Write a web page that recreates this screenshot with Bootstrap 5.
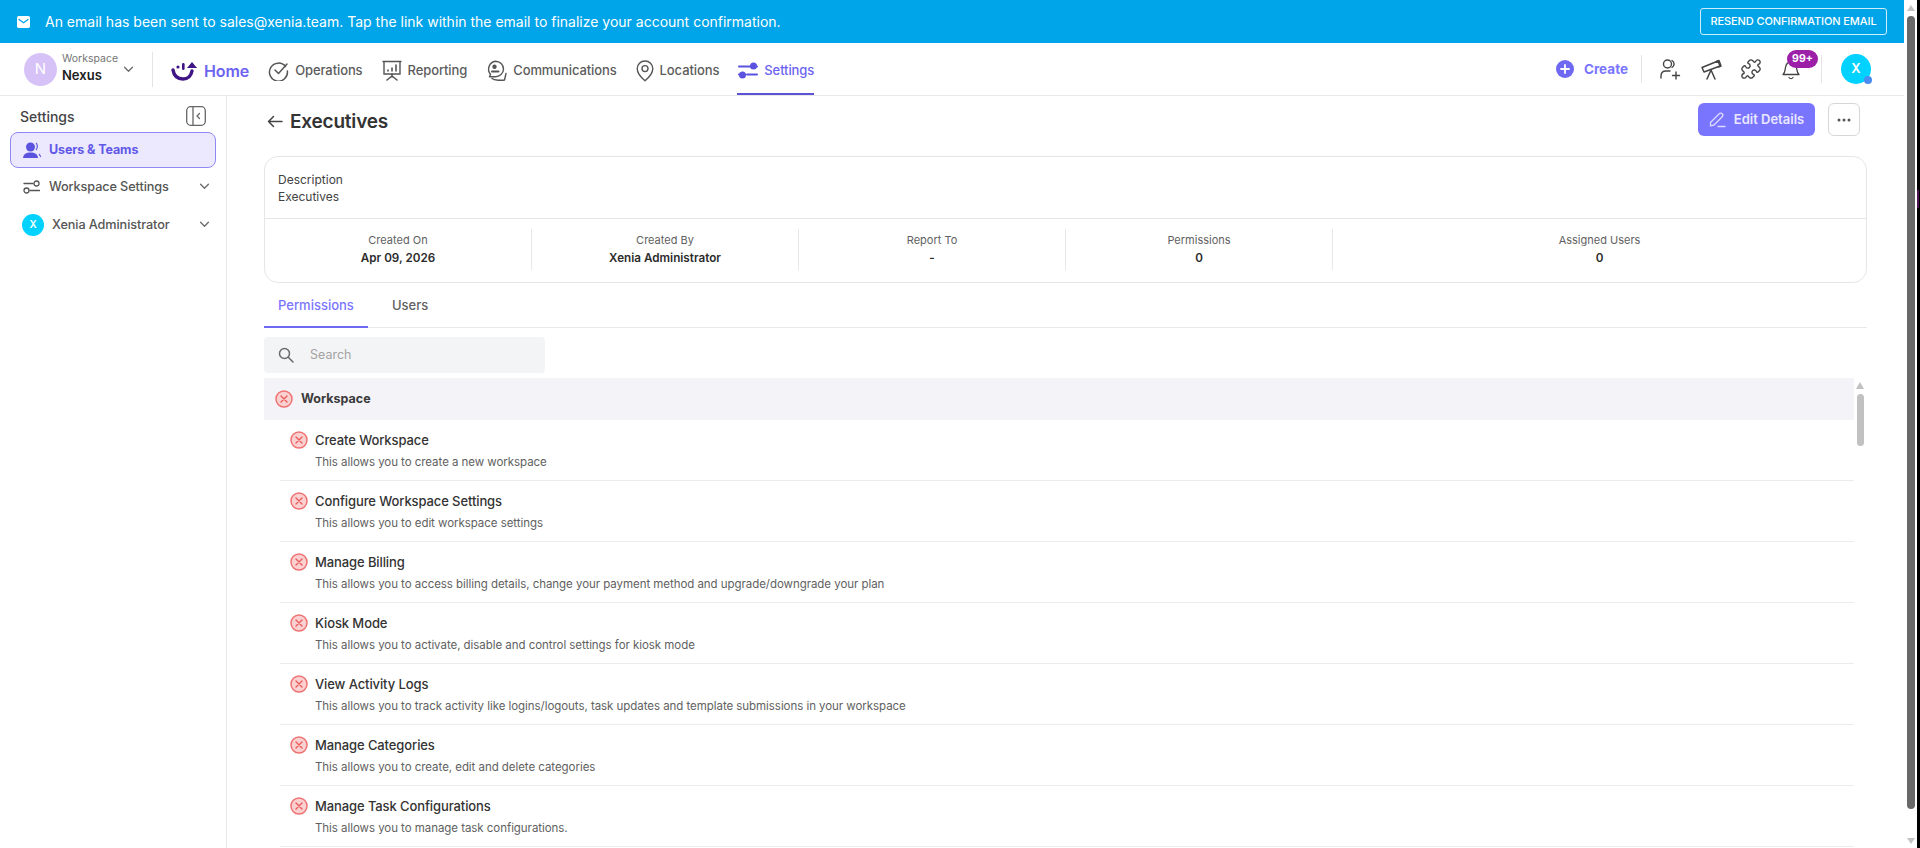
<!DOCTYPE html>
<html lang="en">
<head>
  <meta charset="UTF-8" />
  <meta name="viewport" content="width=device-width, initial-scale=1.0"/>
  <title>Executives</title>
  <link href="https://cdn.jsdelivr.net/npm/bootstrap@5.3.3/dist/css/bootstrap.min.css" rel="stylesheet">
  <style>
    html, body { height: 100%; overflow: hidden; }
    body { font-family: Inter, "Noto Sans", sans-serif; color: #212121; background: #000; font-size: 13px; }
    .page-frame { height: 848px; }
    .app-col { width: 1904px; background: #fff; }
    .bar-col { width: 13px; background: #fff; }
    .edge-col { width: 3px; background: #000; }
    .edge-tick { width: 2px; height: 18px; margin-top: 190px; background: #4a1050; }
    .bar-thumb { width: 8px; height: 793px; margin: 5px 3px 0 3px; border-radius: 4px; background: #686868; }
    .arrow-up, .arrow-down { width: 0; height: 0; margin: 5px auto 0; border-left: 4.5px solid transparent; border-right: 4.5px solid transparent; }
    .arrow-up { border-bottom: 6px solid #c4c4c4; }
    .arrow-down { margin-top: 29px; border-top: 6px solid #c4c4c4; }

    .top-banner { height: 43px; background: #00a4e8; color: #fff; padding: 0 17px; font-size: 14px; }
    .banner-text { margin-left: 15px; }
    .resend-btn { height: 27px; width: 187px; padding: 0; border: 1px solid #cdeefb; border-radius: 3px; background: transparent; color: #fff; font-size: 11px; font-weight: 500; letter-spacing: -.1px; }

    .main-head { height: 53px; border-bottom: 1px solid #e8e8e8; padding-left: 24px; padding-right: 33px; }
    .ws-avatar { width: 33px; height: 33px; border-radius: 50%; background: #d6c2f7; color: #fff; font-size: 15px; }
    .ws-block { width: 61px; margin-left: 5px; margin-top: -2px; }
    .ws-small { font-size: 10.5px; color: #757575; line-height: 14px; }
    .ws-name { font-size: 13px; font-weight: 600; line-height: 18px; }
    .v-rule { width: 1px; background: #e4e4e4; }
    .rule-ws { height: 35px; margin: 0 18px 0 18px; }
    .rule-create { height: 28px; margin: 0 18px 0 13px; }
    .rule-user { height: 28px; margin: 0 19px 0 21px; }
    .head-nav { gap: 19px; }
    .head-link { display: flex; align-items: center; gap: 6px; height: 52px; padding-top: 3px; color: #5c5c5c; font-size: 13px; font-weight: 500; text-decoration: none; position: relative; white-space: nowrap; letter-spacing: -.1px; }
    .head-link.is-on { color: #6c63f0; }
    .head-link.is-on::after { content: ""; position: absolute; left: -1px; right: 0; bottom: 0; height: 2px; background: #5b52d6; }
    .home-link { color: #6c63f0; font-size: 16px; font-weight: 600; }
    .create-link { margin-left: 10px; color: #7a75ff; font-size: 13.5px; font-weight: 700; text-decoration: none; }
    .gap-telescope { margin-left: 20px; }
    .gap-puzzle { margin-left: 18px; }
    .bell-box { width: 18px; height: 22px; margin-left: 20px; position: relative; }
    .count-pill { position: absolute; left: 5px; top: -8px; width: 31px; height: 18px; border-radius: 9px; background: #9c1fa8; color: #fff; font-size: 10.5px; font-weight: 700; }
    .user-circle { width: 30px; height: 30px; border-radius: 50%; background: #00d2ff; color: #fff; font-size: 13px; font-weight: 600; position: relative; }
    .user-dot { position: absolute; right: -1px; bottom: 0; width: 8px; height: 8px; border-radius: 50%; background: #4a8cf0; }

    .side-col { width: 227px; border-right: 1px solid #e8e8e8; padding: 7px 10px 0 10px; }
    .side-title { font-size: 14px; font-weight: 500; color: #444; padding: 0 10px 0 10px; height: 26px; margin-bottom: 3px; }
    .side-item { height: 37px; padding-left: 13px; padding-right: 6px; color: #555; font-size: 12.7px; font-weight: 500; letter-spacing: -.1px; }
    .side-item.is-on { height: 36px; border: 1px solid #8f88f2; border-radius: 8px; background: #ece9fe; color: #6158e8; font-size: 12.5px; font-weight: 700; padding-left: 12px; }
    .side-item.is-on span { margin-left: 8px; padding-top: 1px; }
    .side-tool span { margin-left: 9px; }
    .side-owner { margin-top: 1px; padding-left: 12px; }
    .x-mini { width: 22px; height: 22px; border-radius: 50%; background: #00d2ff; color: #fff; font-size: 10px; font-weight: 600; }

    .work-col { padding: 7px 37px 0 37px; min-width: 0; }
    .title-row { height: 33px; }
    .back-arrow { margin: 4px 0 0 3px; }
    .page-title { font-size: 19px; font-weight: 600; color: #333; margin: 5px 0 0 7px; letter-spacing: -.2px; }
    .edit-btn { width: 117px; height: 33px; padding: 0; border: 0; border-radius: 6px; background: #7a75ff; color: #e9e8ff; font-size: 13px; font-weight: 600; }
    .more-btn { width: 32px; height: 33px; padding: 0; border: 1px solid #d6d6d6; border-radius: 6px; background: #fff; margin: 0 7px 0 13px; }
    .info-box { height: 127px; margin-top: 20px; border: 1px solid #e6e6e6; border-radius: 14px; }
    .info-top { height: 62px; padding: 14px 13px 0; border-bottom: 1px solid #e6e6e6; font-size: 12px; line-height: 17px; color: #424242; }
    .stat-row { padding-top: 10px; }
    .stat-cell { width: 267px; height: 41px; padding-top: 3px; border-right: 1px solid #e8e8e8; text-align: center; }
    .stat-cell.is-last { flex: 1; border-right: 0; }
    .stat-key { font-size: 11px; line-height: 17px; color: #616161; }
    .stat-val { font-size: 11.7px; font-weight: 600; line-height: 19px; color: #2b2b2b; }
    .tab-strip { height: 45px; border-bottom: 1px solid #e8e8e8; font-size: 13px; font-weight: 500; }
    .tab-item { height: 45px; color: #616161; padding-top: 13px; text-decoration: none; position: relative; }
    .tab-item.is-on { width: 104px; padding-left: 14px; color: #7a75ff; border-bottom: 2px solid #6e68f2; }
    .search-wrap { width: 281px; height: 36px; margin-top: 9px; padding-left: 14px; border-radius: 4px; background: #f3f4f6; }
    .search-wrap input { width: 200px; margin-left: 16px; border: 0; padding: 0; outline: 0; background: transparent; font-size: 12.5px; }
    .search-wrap input::placeholder { color: #a3a3a3; }
    .perm-scroll { margin-top: 5px; }
    .perm-rows { width: 1590px; }
    .perm-head { height: 42px; padding-left: 11px; background: #f3f3f8; font-size: 12.5px; font-weight: 700; color: #3a3a3a; }
    .perm-row { height: 61px; margin-left: 16px; padding: 11px 0 0 10px; border-bottom: 1px solid #ececec; }
    .perm-icon { margin-right: 7px; flex-shrink: 0; }
    .perm-name { font-size: 13px; font-weight: 500; line-height: 18px; color: #333; letter-spacing: -.1px; }
    .perm-note { font-size: 11.5px; line-height: 16px; margin-top: 5px; color: #616161; letter-spacing: -.05px; }
    .inner-bar { width: 9px; margin-left: 2px; padding-top: 4px; }
    .inner-up { width: 0; height: 0; border-left: 4.5px solid transparent; border-right: 4.5px solid transparent; border-bottom: 7px solid #c1c1c1; }
    .inner-thumb { width: 7px; height: 52px; margin: 5px 0 0 1px; border-radius: 4px; background: #c1c1c1; }
  </style>
</head>
<body>

<svg width="0" height="0" class="d-none">
  <symbol id="deny" viewBox="0 0 18 18">
    <circle cx="9" cy="9" r="8" fill="#fbd0d0" stroke="#ee7272" stroke-width="1.5"/>
    <path d="M6 6l6 6M12 6l-6 6" stroke="#e85c5c" stroke-width="1.4" stroke-linecap="round"/>
  </symbol>
  <symbol id="chev" viewBox="0 0 12 8">
    <path d="M1.5 1.5L6 6l4.5-4.5" fill="none" stroke="#6b6b6b" stroke-width="1.5" stroke-linecap="round" stroke-linejoin="round"/>
  </symbol>
</svg>

<div class="page-frame d-flex">
  <div class="app-col d-flex flex-column">

    <!-- Banner -->
    <div class="top-banner d-flex align-items-center">
      <svg width="13" height="12" viewBox="0 0 12 11" class="flex-shrink-0"><rect width="12" height="11" rx="1.5" fill="#fff"/><path d="M1.5 3L6 6.2 10.5 3" fill="none" stroke="#00a4e8" stroke-width="1.2"/></svg>
      <span class="banner-text flex-grow-1">An email has been sent to sales@xenia.team. Tap the link within the email to finalize your account confirmation.</span>
      <button class="resend-btn" type="button">RESEND CONFIRMATION EMAIL</button>
    </div>

    <!-- Header -->
    <div class="main-head d-flex align-items-center">
      <div class="ws-avatar d-flex align-items-center justify-content-center flex-shrink-0">N</div>
      <div class="ws-block">
        <div class="ws-small">Workspace</div>
        <div class="ws-name">Nexus</div>
      </div>
      <svg width="11" height="7"><use href="#chev"/></svg>
      <div class="v-rule rule-ws"></div>

      <div class="head-nav d-flex align-items-center">
        <a href="#" class="head-link home-link">
          <svg width="27" height="22" viewBox="0 0 27 22"><path d="M2 10c1 6 5 9 10 9 5 0 8-3 9-8" fill="none" stroke="#3f1585" stroke-width="3.4" stroke-linecap="round"/><path d="M16 8l5-6 5 6z" fill="#3f1585"/><circle cx="7" cy="7" r="1.6" fill="#3f1585"/><rect x="11" y="3" width="2.6" height="7" rx="1.3" fill="#3f1585"/></svg>
          Home
        </a>
        <a href="#" class="head-link">
          <svg width="21" height="21" viewBox="0 0 21 21" fill="none" stroke="#555" stroke-width="1.5" stroke-linecap="round" stroke-linejoin="round"><path d="M17.5 6.5A9 9 0 1 0 19.4 11"/><path d="M7 10l3.5 3.5L19 4"/></svg>
          Operations
        </a>
        <a href="#" class="head-link">
          <svg width="20" height="21" viewBox="0 0 20 21" fill="none" stroke="#555" stroke-width="1.4" stroke-linecap="round"><path d="M1 1.5h18M2 1.5v12.5h16V1.5"/><path d="M6 11v-1M10 11V8M14 11V5" stroke-width="1.6"/><path d="M10 14v3M10 16l-5 4M10 16l5 4" stroke-width="1.6"/></svg>
          Reporting
        </a>
        <a href="#" class="head-link">
          <svg width="21" height="22" viewBox="0 0 21 22" fill="none" stroke="#555" stroke-width="1.4" stroke-linecap="round" stroke-linejoin="round"><path d="M9.5 1.2a8 8 0 0 1 8 8 8 8 0 0 1-8 7.6H3.5l1-2.5a8 8 0 0 1 5-13.1z"/><circle cx="8.5" cy="6.8" r="1.5" fill="#555"/><path d="M6 11.5h6.5" stroke-width="2"/><path d="M6 18.5c2.5 2 10 2 12.5 1.5l1.5-6.5"/></svg>
          Communications
        </a>
        <a href="#" class="head-link">
          <svg width="18" height="22" viewBox="0 0 18 22" fill="none" stroke="#555" stroke-width="1.4"><path d="M9 1C4.6 1 1.2 4.4 1.2 8.6c0 4.8 4.6 9.6 7.8 12.2 3.2-2.6 7.8-7.4 7.8-12.2C16.8 4.4 13.4 1 9 1z" stroke-linejoin="round"/><circle cx="9" cy="8.6" r="3"/></svg>
          Locations
        </a>
        <a href="#" class="head-link is-on">
          <svg width="20" height="19" viewBox="0 0 20 19" fill="none" stroke="#5b52e0" stroke-width="2" stroke-linecap="round"><path d="M1 5.5h12M9 13.5h10M1 13.5h1M18 5.5h1"/><circle cx="15.5" cy="5" r="3.5" fill="#5b52e0" stroke="none"/><circle cx="4.5" cy="14" r="3.5" fill="#5b52e0" stroke="none"/></svg>
          Settings
        </a>
      </div>

      <div class="ms-auto d-flex align-items-center">
        <svg width="18" height="18" viewBox="0 0 18 18"><circle cx="9" cy="9" r="9" fill="#6e68f2"/><path d="M9 5v8M5 9h8" stroke="#fff" stroke-width="1.8" stroke-linecap="round"/></svg>
        <a href="#" class="create-link">Create</a>
        <div class="v-rule rule-create"></div>
        <svg width="21" height="21" viewBox="0 0 21 21" fill="none" stroke="#444" stroke-width="1.4" stroke-linecap="round"><circle cx="7.5" cy="5" r="4"/><path d="M12 1.5a4 4 0 0 1 0 7"/><path d="M1 19v-2c0-3 2-5 5-5h4"/><path d="M16 13v7M12.5 16.5h7"/></svg>
        <svg width="21" height="21" viewBox="0 0 21 21" fill="none" stroke="#444" stroke-width="1.5" stroke-linecap="round" stroke-linejoin="round" class="gap-telescope"><path d="M1 8.5l16-6.5 2 5-16 6z"/><path d="M15.5 2.5l2.5-1 2 5.5-2.5 1"/><path d="M10 11l-4 9M10 11l4 9"/></svg>
        <svg width="22" height="22" viewBox="0 0 24 24" fill="none" stroke="#444" stroke-width="1.5" stroke-linejoin="round" class="gap-puzzle"><path d="M19.439 7.85c-.049.322.059.648.289.878l1.568 1.568c.47.47.706 1.087.706 1.704s-.235 1.233-.706 1.704l-1.611 1.611a.98.98 0 0 1-.837.276c-.47-.07-.802-.48-.968-.925a2.501 2.501 0 1 0-3.214 3.214c.446.166.855.497.925.968a.979.979 0 0 1-.276.837l-1.61 1.61a2.404 2.404 0 0 1-1.705.707 2.402 2.402 0 0 1-1.704-.706l-1.568-1.568a1.026 1.026 0 0 0-.877-.29c-.493.074-.84.504-1.02.968a2.5 2.5 0 1 1-3.237-3.237c.464-.18.894-.527.967-1.02a1.026 1.026 0 0 0-.289-.877l-1.568-1.568A2.402 2.402 0 0 1 1.998 12c0-.617.236-1.234.706-1.704L4.23 8.77c.24-.24.581-.353.917-.303.515.077.877.528 1.073 1.01a2.5 2.5 0 1 0 3.259-3.259c-.482-.196-.933-.558-1.01-1.073-.05-.336.062-.676.303-.917l1.525-1.525A2.402 2.402 0 0 1 12 1.998c.617 0 1.234.236 1.704.706l1.568 1.568c.23.23.556.338.877.29.493-.074.84-.504 1.02-.968a2.5 2.5 0 1 1 3.237 3.237c-.464.18-.894.527-.967 1.02Z"/></svg>
        <div class="bell-box">
          <svg width="18" height="22" viewBox="0 0 18 22" fill="none" stroke="#444" stroke-width="1.3" stroke-linecap="round" stroke-linejoin="round"><path d="M1 16.5c2-2 2-4 2.5-7C4 6 6 4 9 4s5 2 5.5 5.5c.5 3 .5 5 2.500 7z"/><path d="M7 19.5c1 1.5 3 1.5 4 0"/></svg>
          <div class="count-pill d-flex align-items-center justify-content-center">99+</div>
        </div>
        <div class="v-rule rule-user"></div>
        <div class="user-circle d-flex align-items-center justify-content-center">X<span class="user-dot"></span></div>
      </div>
    </div>

    <div class="d-flex flex-grow-1 overflow-hidden">
      <!-- Sidebar -->
      <div class="side-col flex-shrink-0">
        <div class="side-title d-flex align-items-center justify-content-between">
          <span>Settings</span>
          <svg width="20" height="20" viewBox="0 0 20 20" fill="none" stroke="#666" stroke-width="1.3" stroke-linecap="round" stroke-linejoin="round"><rect x=".7" y=".7" width="18.6" height="18.6" rx="4"/><path d="M7 1v18M13.5 7.5L11 10l2.5 2.5"/></svg>
        </div>
        <div class="side-item is-on d-flex align-items-center">
          <svg width="18" height="17" viewBox="0 0 18 17" fill="#5b52e0"><circle cx="7.5" cy="5" r="4.5"/><path d="M0 16c.5-4 3-5.5 7.5-5.5S14.5 12 15 16z"/><path d="M13 1c1.5 1 2 5 0 7" fill="none" stroke="#5b52e0" stroke-width="1.2"/><path d="M16 12l2 3" stroke="#5b52e0" stroke-width="1.2"/></svg>
          <span>Users &amp; Teams</span>
        </div>
        <div class="side-item side-tool d-flex align-items-center">
          <svg width="17" height="14" viewBox="0 0 17 14" fill="none" stroke="#555" stroke-width="1.3" stroke-linecap="round" class="flex-shrink-0"><circle cx="13.5" cy="3.5" r="2.5"/><circle cx="3.5" cy="10.5" r="2.5"/><path d="M1 3.5h9M7 10.5h9.5"/></svg>
          <span class="flex-grow-1">Workspace Settings</span>
          <svg width="11" height="7"><use href="#chev"/></svg>
        </div>
        <div class="side-item side-owner d-flex align-items-center">
          <div class="x-mini d-flex align-items-center justify-content-center flex-shrink-0">X</div>
          <span class="ms-2 flex-grow-1">Xenia Administrator</span>
          <svg width="11" height="7"><use href="#chev"/></svg>
        </div>
      </div>

      <!-- Main -->
      <div class="work-col flex-grow-1">
        <div class="title-row d-flex align-items-center">
          <svg width="16" height="13" viewBox="0 0 16 13" fill="none" stroke="#444" stroke-width="1.5" stroke-linecap="round" stroke-linejoin="round" class="back-arrow"><path d="M15 6.5H1.5M6.5 1.5l-5 5 5 5"/></svg>
          <h1 class="page-title">Executives</h1>
          <button type="button" class="edit-btn ms-auto d-flex align-items-center justify-content-center">
            <svg width="17" height="17" viewBox="0 0 17 17" fill="none" stroke="#dcdaff" stroke-width="1.3" stroke-linecap="round" stroke-linejoin="round" class="me-2"><path d="M1.5 11.5L10 3c1-1 2.5-1 3.2-.2.8.8.8 2.2-.2 3.2l-8 8-3.5.8z"/><path d="M9 15.5h7"/></svg>
            Edit Details
          </button>
          <button type="button" class="more-btn d-flex align-items-center justify-content-center">
            <svg width="14" height="4" viewBox="0 0 14 4" fill="#555"><circle cx="2" cy="2" r="1.5"/><circle cx="7" cy="2" r="1.5"/><circle cx="12" cy="2" r="1.5"/></svg>
          </button>
        </div>

        <div class="info-box">
          <div class="info-top">
            <div>Description</div>
            <div>Executives</div>
          </div>
          <div class="stat-row d-flex">
            <div class="stat-cell"><div class="stat-key">Created On</div><div class="stat-val">Apr 09, 2026</div></div>
            <div class="stat-cell"><div class="stat-key">Created By</div><div class="stat-val">Xenia Administrator</div></div>
            <div class="stat-cell"><div class="stat-key">Report To</div><div class="stat-val">-</div></div>
            <div class="stat-cell"><div class="stat-key">Permissions</div><div class="stat-val">0</div></div>
            <div class="stat-cell is-last"><div class="stat-key">Assigned Users</div><div class="stat-val">0</div></div>
          </div>
        </div>

        <div class="tab-strip d-flex">
          <a href="#" class="tab-item is-on">Permissions</a>
          <a href="#" class="tab-item ms-4">Users</a>
        </div>

        <div class="search-wrap d-flex align-items-center">
          <svg width="16" height="16" viewBox="0 0 16 16" fill="none" stroke="#6b6b6b" stroke-width="1.5" stroke-linecap="round"><circle cx="6.5" cy="6.5" r="5"/><path d="M10.5 10.5L15 15"/></svg>
          <input type="text" placeholder="Search">
        </div>

        <div class="perm-scroll d-flex">
          <div class="perm-rows">
            <div class="perm-head d-flex align-items-center">
              <svg width="18" height="18" class="me-2 flex-shrink-0"><use href="#deny"/></svg>
              Workspace
            </div>
            <div class="perm-row d-flex">
              <svg width="18" height="18" class="perm-icon"><use href="#deny"/></svg>
              <div><div class="perm-name">Create Workspace</div><div class="perm-note">This allows you to create a new workspace</div></div>
            </div>
            <div class="perm-row d-flex">
              <svg width="18" height="18" class="perm-icon"><use href="#deny"/></svg>
              <div><div class="perm-name">Configure Workspace Settings</div><div class="perm-note">This allows you to edit workspace settings</div></div>
            </div>
            <div class="perm-row d-flex">
              <svg width="18" height="18" class="perm-icon"><use href="#deny"/></svg>
              <div><div class="perm-name">Manage Billing</div><div class="perm-note">This allows you to access billing details, change your payment method and upgrade/downgrade your plan</div></div>
            </div>
            <div class="perm-row d-flex">
              <svg width="18" height="18" class="perm-icon"><use href="#deny"/></svg>
              <div><div class="perm-name">Kiosk Mode</div><div class="perm-note">This allows you to activate, disable and control settings for kiosk mode</div></div>
            </div>
            <div class="perm-row d-flex">
              <svg width="18" height="18" class="perm-icon"><use href="#deny"/></svg>
              <div><div class="perm-name">View Activity Logs</div><div class="perm-note">This allows you to track activity like logins/logouts, task updates and template submissions in your workspace</div></div>
            </div>
            <div class="perm-row d-flex">
              <svg width="18" height="18" class="perm-icon"><use href="#deny"/></svg>
              <div><div class="perm-name">Manage Categories</div><div class="perm-note">This allows you to create, edit and delete categories</div></div>
            </div>
            <div class="perm-row d-flex">
              <svg width="18" height="18" class="perm-icon"><use href="#deny"/></svg>
              <div><div class="perm-name">Manage Task Configurations</div><div class="perm-note">This allows you to manage task configurations.</div></div>
            </div>
          </div>
          <div class="inner-bar">
            <div class="inner-up"></div>
            <div class="inner-thumb"></div>
          </div>
        </div>
      </div>
    </div>
  </div>

  <!-- Window scrollbar -->
  <div class="bar-col">
    <div class="arrow-up"></div>
    <div class="bar-thumb"></div>
    <div class="arrow-down"></div>
  </div>
  <div class="edge-col"><div class="edge-tick"></div></div>
</div>

<script src="https://cdn.jsdelivr.net/npm/bootstrap@5.3.3/dist/js/bootstrap.bundle.min.js"></script>
</body>
</html>
